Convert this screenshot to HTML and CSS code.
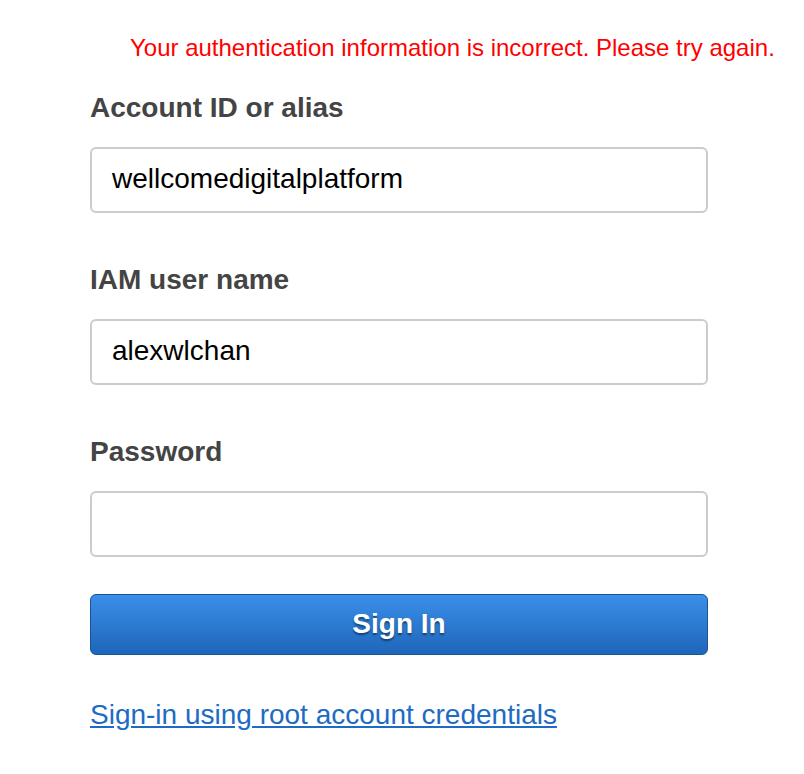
FILE: index.html
```html
<!DOCTYPE html>
<html>
<head>
<meta charset="utf-8">
<link rel="stylesheet" href="styles.css">
</head>
<body>
<div class="page">
  <p class="error">Your authentication information is incorrect. Please try again.</p>
  <form class="form">
    <div class="field">
      <label class="label">Account ID or alias</label>
      <div class="input">wellcomedigitalplatform</div>
    </div>
    <div class="field">
      <label class="label">IAM user name</label>
      <div class="input">alexwlchan</div>
    </div>
    <div class="field">
      <label class="label">Password</label>
      <div class="input"></div>
    </div>
    <div class="button">Sign In</div>
    <a class="link" href="#">Sign-in using root account credentials</a>
  </form>
</div>
</body>
</html>
```
FILE: styles.css
```css
html, body {
  margin: 0;
  padding: 0;
  background: #fff;
}
.page {
  font-family: "Liberation Sans", Arial, sans-serif;
  padding-top: 33px;
}
.error {
  margin: 0 0 0 130px;
  color: #ff0000;
  font-size: 24px;
  line-height: 30px;
}
.form {
  margin: 0 0 0 90px;
  width: 618px;
  display: flex;
  flex-direction: column;
}
.field {
  display: flex;
  flex-direction: column;
}
.label {
  margin-top: 29px;
  margin-bottom: 23px;
  font-weight: bold;
  font-size: 28px;
  line-height: 32px;
  color: #444;
}
.field + .field .label {
  margin-top: 51px;
}
.input {
  height: 62px;
  border: 2px solid #cccccc;
  border-radius: 6px;
  padding: 0 20px;
  font-size: 28px;
  line-height: 59px;
  color: #000;
}
.button {
  margin-top: 37px;
  height: 59px;
  border: 1px solid #1a5494;
  border-radius: 6px;
  background: linear-gradient(#3a8fe8, #1e66ba);
  color: #fff;
  font-weight: bold;
  font-size: 28px;
  line-height: 58px;
  text-align: center;
  text-shadow: 0 2px 2px rgba(0,0,0,0.45);
}
.link {
  margin-top: 44px;
  align-self: flex-start;
  color: #1d6bc4;
  font-size: 28px;
  line-height: 32px;
  text-decoration: underline;
}
```
